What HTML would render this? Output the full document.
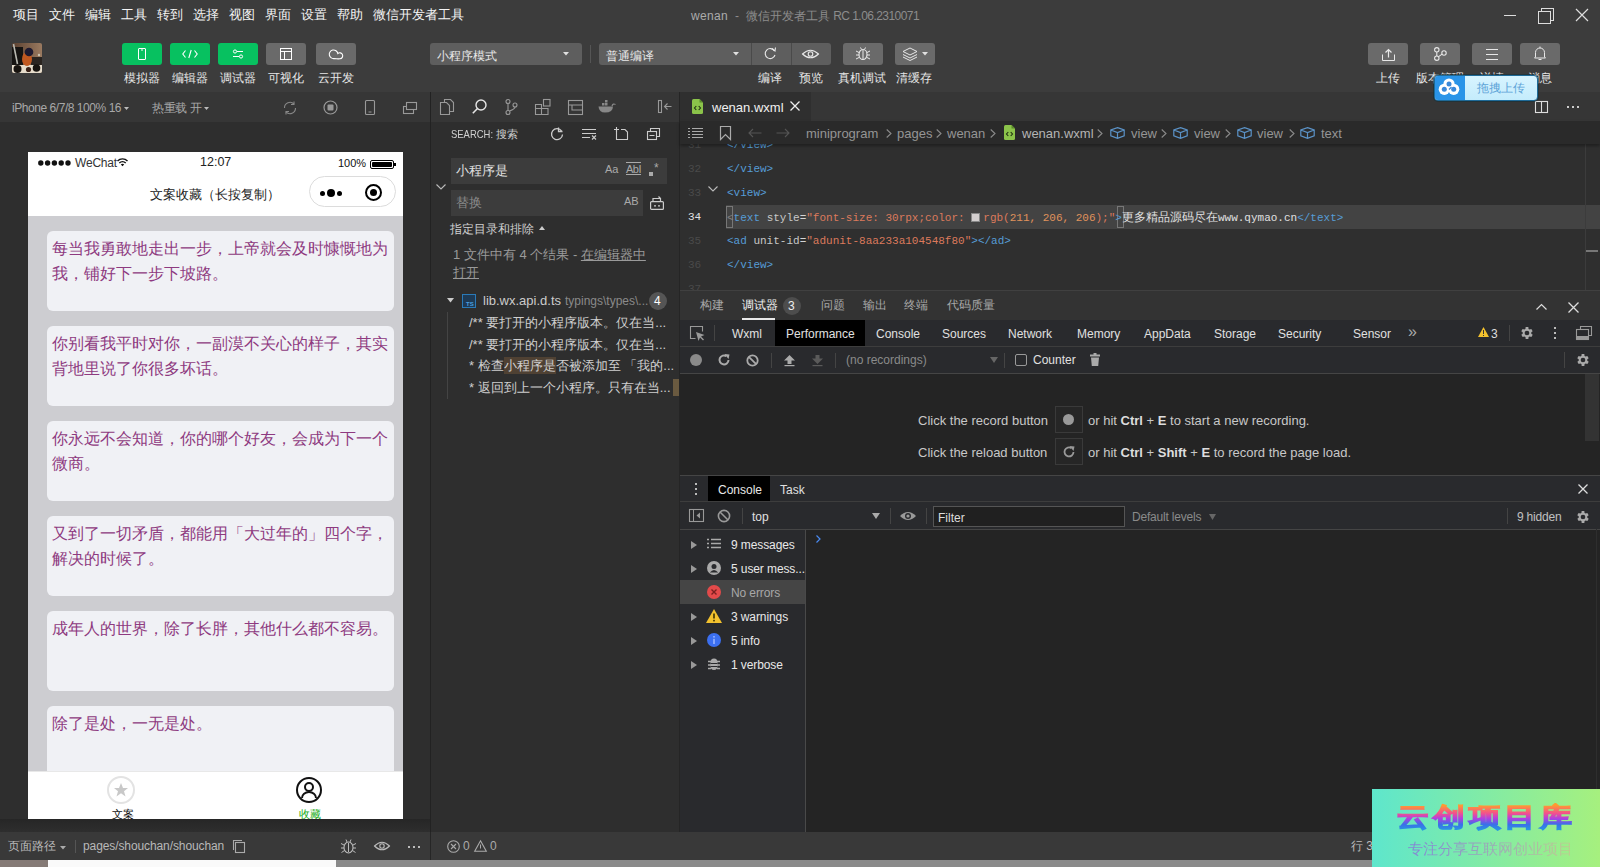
<!DOCTYPE html>
<html><head><meta charset="utf-8">
<style>
*{box-sizing:border-box;margin:0;padding:0}
html,body{width:1600px;height:867px;overflow:hidden;background:#2e2e2e;font-family:"Liberation Sans",sans-serif;color:#ddd}
.a{position:absolute}
.t{position:absolute;white-space:nowrap;line-height:1}
svg{position:absolute;overflow:visible}
.gbtn{position:absolute;top:43px;width:40px;height:22px;border-radius:3px;background:#07c160}
.hbtn{position:absolute;top:43px;width:40px;height:22px;border-radius:3px;background:#6a6a6a}
.lbl{position:absolute;top:71px;font-size:12px;color:#e6e6e6;white-space:nowrap;line-height:14px;text-align:center;width:60px}
.mono{font-family:"Liberation Mono",monospace}
</style></head><body>
<!--TOP-->
<div class="a" style="left:0;top:0;width:1600px;height:92px;background:#3c3c3c"></div>
<div class="t" style="left:13px;top:8px;font-size:13px;color:#f4f4f4">
<span style="margin-right:10px">项目</span><span style="margin-right:10px">文件</span><span style="margin-right:10px">编辑</span><span style="margin-right:10px">工具</span><span style="margin-right:10px">转到</span><span style="margin-right:10px">选择</span><span style="margin-right:10px">视图</span><span style="margin-right:10px">界面</span><span style="margin-right:10px">设置</span><span style="margin-right:10px">帮助</span><span>微信开发者工具</span>
</div>
<div class="t" style="left:691px;top:10px;font-size:12px;color:#8c8c8c"><span style="color:#ababab;letter-spacing:0.3px">wenan</span><span style="margin:0 7px 0 7px">-</span><span>微信开发者工具</span> <span style="letter-spacing:-0.55px">RC 1.06.2310071</span></div>
<div class="a" style="left:1504px;top:15px;width:12px;height:1px;background:#ddd"></div>
<div class="a" style="left:1541px;top:8px;width:13px;height:13px;border:1px solid #ddd"></div>
<div class="a" style="left:1538px;top:11px;width:13px;height:13px;border:1px solid #ddd;background:#3c3c3c"></div>
<svg style="left:1576px;top:9px" width="12" height="12"><path d="M0 0L12 12M12 0L0 12" stroke="#ddd" stroke-width="1.2"/></svg>

<!-- avatar -->
<svg style="left:12px;top:43px" width="30" height="30"><defs><linearGradient id="avbg" x1="0" y1="0" x2="1" y2="0"><stop offset="0" stop-color="#5a4030"/><stop offset="1" stop-color="#9a7a60"/></linearGradient><clipPath id="avc"><rect x="0" y="0" width="30" height="30" rx="2"/></clipPath></defs>
<g clip-path="url(#avc)"><rect width="30" height="30" fill="url(#avbg)"/><rect x="0" y="4" width="11" height="19" fill="#161412"/><rect x="19" y="14" width="11" height="9" fill="#2a2420"/><rect x="0" y="22" width="30" height="8" fill="#e6dccb"/>
<path d="M1.5 1L5.5 21" stroke="#b8b8b0" stroke-width="1.6"/><ellipse cx="15" cy="16" rx="5" ry="7" fill="#c05820"/><circle cx="17" cy="9" r="4.3" fill="#1e1a30"/><circle cx="5.5" cy="26" r="4" fill="#181410"/><circle cx="24.5" cy="25" r="3.8" fill="#181410"/><circle cx="16.5" cy="26.5" r="2.6" fill="#3a2218"/><circle cx="27" cy="12" r="1.2" fill="#c8c0b0"/></g></svg>
<div class="gbtn" style="left:122px"></div>
<svg style="left:138px;top:48px" width="8" height="12"><rect x="0.5" y="0.5" width="7" height="11" rx="0.5" fill="none" stroke="#fff" stroke-width="1"/><line x1="3" y1="2" x2="5" y2="2" stroke="#fff"/></svg>
<div class="gbtn" style="left:170px"></div>
<svg style="left:182px;top:50px" width="16" height="8"><path d="M3.5 0.5L0.8 4L3.5 7.5M12.5 0.5L15.2 4L12.5 7.5M9.2 0L6.8 8" fill="none" stroke="#fff" stroke-width="1.1"/></svg>
<div class="gbtn" style="left:218px"></div>
<svg style="left:232px;top:49px" width="12" height="10"><circle cx="3" cy="2.5" r="1.6" fill="none" stroke="#fff"/><line x1="5" y1="2.5" x2="11" y2="2.5" stroke="#fff"/><circle cx="9" cy="7.5" r="1.6" fill="none" stroke="#fff"/><line x1="1" y1="7.5" x2="7" y2="7.5" stroke="#fff"/></svg>
<div class="hbtn" style="left:266px"></div>
<svg style="left:280px;top:48px" width="12" height="12"><rect x="0.5" y="0.5" width="11" height="11" fill="none" stroke="#fff"/><line x1="0.5" y1="3.5" x2="11.5" y2="3.5" stroke="#fff"/><line x1="4.5" y1="3.5" x2="4.5" y2="11.5" stroke="#fff"/></svg>
<div class="hbtn" style="left:316px"></div>
<svg style="left:328px;top:49px" width="16" height="11"><path d="M6.5 9.5A4.3 4.3 0 1 1 9.8 4.5A3 3 0 1 1 12 9.8Q9 10 6.5 9.5" fill="none" stroke="#fff" stroke-width="1.1"/></svg>
<div class="lbl" style="left:112px">模拟器</div>
<div class="lbl" style="left:160px">编辑器</div>
<div class="lbl" style="left:208px">调试器</div>
<div class="lbl" style="left:256px">可视化</div>
<div class="lbl" style="left:306px">云开发</div>

<!-- selects -->
<div class="a" style="left:430px;top:43px;width:152px;height:22px;border-radius:3px;background:#5e5e5e"></div>
<div class="t" style="left:437px;top:49px;font-size:12px;color:#e8e8e8;line-height:14px">小程序模式</div>
<svg style="left:563px;top:52px" width="6" height="4"><path d="M0 0H6L3 3.5Z" fill="#e0e0e0"/></svg>
<div class="a" style="left:590px;top:45px;width:1px;height:18px;background:#555"></div>
<div class="a" style="left:599px;top:43px;width:232px;height:22px;border-radius:3px;background:#5e5e5e"></div>
<div class="a" style="left:751px;top:43px;width:1px;height:22px;background:#4a4a4a"></div>
<div class="a" style="left:791px;top:43px;width:1px;height:22px;background:#4a4a4a"></div>
<div class="t" style="left:606px;top:49px;font-size:12px;color:#e8e8e8;line-height:14px">普通编译</div>
<svg style="left:733px;top:52px" width="6" height="4"><path d="M0 0H6L3 3.5Z" fill="#e0e0e0"/></svg>
<svg style="left:764px;top:47px" width="13" height="13"><path d="M10.5 4A5 5 0 1 0 11 8" fill="none" stroke="#e8e8e8" stroke-width="1.1"/><path d="M8 1.5L11 4L11.5 0.5" fill="none" stroke="#e8e8e8" stroke-width="1.1"/></svg>
<svg style="left:802px;top:49px" width="17" height="10"><path d="M0.5 5Q8.5 -2.5 16.5 5Q8.5 12.5 0.5 5Z" fill="none" stroke="#e8e8e8" stroke-width="1.1"/><circle cx="8.5" cy="5" r="2.3" fill="none" stroke="#e8e8e8" stroke-width="1.1"/></svg>
<div class="hbtn" style="left:843px"></div>
<svg style="left:855px;top:46px" width="16" height="15"><ellipse cx="8" cy="8.5" rx="4" ry="5" fill="none" stroke="#e8e8e8" stroke-width="1.1"/><line x1="8" y1="4" x2="8" y2="13" stroke="#e8e8e8"/><path d="M1 5L4 6.5M1 9H4M1 13L4 11.5M15 5L12 6.5M15 9H12M15 13L12 11.5M5.5 1.5L6.5 3.5M10.5 1.5L9.5 3.5" stroke="#e8e8e8" stroke-width="1"/></svg>
<div class="hbtn" style="left:895px"></div>
<svg style="left:902px;top:47px" width="16" height="14"><path d="M8 1L15 4.5L8 8L1 4.5Z" fill="none" stroke="#e8e8e8"/><path d="M1 7.5L8 11L15 7.5M1 10L8 13.5L15 10" fill="none" stroke="#e8e8e8"/></svg>
<svg style="left:922px;top:52px" width="6" height="4"><path d="M0 0H6L3 3.5Z" fill="#e0e0e0"/></svg>
<div class="lbl" style="left:740px">编译</div>
<div class="lbl" style="left:781px">预览</div>
<div class="lbl" style="left:832px">真机调试</div>
<div class="lbl" style="left:884px">清缓存</div>

<!-- right buttons -->
<div class="hbtn" style="left:1368px"></div>
<svg style="left:1382px;top:48px" width="13" height="13"><path d="M0.5 6.5V12.5H12.5V6.5" fill="none" stroke="#e8e8e8"/><path d="M6.5 9.5V1.5M3.5 4.5L6.5 1.5L9.5 4.5" fill="none" stroke="#e8e8e8" stroke-width="1.2"/></svg>
<div class="hbtn" style="left:1420px"></div>
<svg style="left:1434px;top:47px" width="13" height="14"><circle cx="2.8" cy="2.8" r="2.2" fill="none" stroke="#e8e8e8" stroke-width="1.1"/><circle cx="2.8" cy="11.2" r="2.2" fill="none" stroke="#e8e8e8" stroke-width="1.1"/><circle cx="10" cy="6" r="2.2" fill="none" stroke="#e8e8e8" stroke-width="1.1"/><path d="M2.8 5V9M8.1 7.1L4.6 9.6" fill="none" stroke="#e8e8e8" stroke-width="1.1"/></svg>
<div class="hbtn" style="left:1472px"></div>
<svg style="left:1486px;top:49px" width="12" height="11"><path d="M0 0.5H12M0 5.5H12M0 10.5H12" stroke="#e8e8e8"/></svg>
<div class="hbtn" style="left:1520px"></div>
<svg style="left:1534px;top:46px" width="12" height="15"><path d="M1.5 11V6.5A4.5 4.5 0 0 1 10.5 6.5V11L11.5 12H0.5Z" fill="none" stroke="#e8e8e8"/><line x1="6" y1="0.5" x2="6" y2="2" stroke="#e8e8e8"/><path d="M4.5 13.5H7.5" stroke="#e8e8e8"/></svg>
<div class="lbl" style="left:1358px">上传</div>
<div class="lbl" style="left:1410px">版本管理</div>
<div class="lbl" style="left:1462px">详情</div>
<div class="lbl" style="left:1510px">消息</div>
<!--/TOP-->
<!--SIM-->
<div class="a" style="left:0;top:92px;width:430px;height:741px;background:#2e2e2e"></div>
<div class="a" style="left:0;top:92px;width:430px;height:30px;background:#363636"></div>
<div class="t" style="left:12px;top:102px;font-size:12px;color:#a8a8a8;letter-spacing:-0.45px">iPhone 6/7/8 100% 16</div>
<svg style="left:124px;top:107px" width="5" height="3"><path d="M0 0H5L2.5 3Z" fill="#bbb"/></svg>
<div class="t" style="left:152px;top:102px;font-size:12px;color:#a8a8a8;letter-spacing:-0.3px">热重载 开</div>
<svg style="left:204px;top:107px" width="5" height="3"><path d="M0 0H5L2.5 3Z" fill="#bbb"/></svg>
<svg style="left:283px;top:101px" width="14" height="14"><path d="M12.5 7A5.5 5.5 0 0 1 3 10.9M1.5 7A5.5 5.5 0 0 1 11 3.1" fill="none" stroke="#888" stroke-width="1.1"/><path d="M11 0.5V3.5H8M3 13.5V10.5H6" fill="none" stroke="#888" stroke-width="1.1"/></svg>
<svg style="left:323px;top:100px" width="15" height="15"><circle cx="7.5" cy="7.5" r="6.5" fill="none" stroke="#999" stroke-width="1.2"/><rect x="4.5" y="4.5" width="6" height="6" rx="1" fill="#999"/></svg>
<svg style="left:365px;top:100px" width="10" height="15"><rect x="0.5" y="0.5" width="9" height="14" rx="1" fill="none" stroke="#999" stroke-width="1.1"/><line x1="3.5" y1="12" x2="6.5" y2="12" stroke="#999"/></svg>
<svg style="left:403px;top:102px" width="14" height="12"><rect x="0.5" y="4.5" width="10" height="7" fill="none" stroke="#999" stroke-width="1.1"/><rect x="3.5" y="0.5" width="10" height="7" fill="#363636" stroke="#999" stroke-width="1.1"/></svg>

<div class="a" style="left:0;top:819px;width:430px;height:13px;background:linear-gradient(180deg,#262626,#2e2e2e)"></div>
<!-- phone -->
<div class="a" style="left:28px;top:152px;width:375px;height:667px;background:#cdcdd1;overflow:hidden">
  <div class="a" style="left:0;top:0;width:375px;height:64px;background:#fff"></div>
  <svg style="left:10px;top:159px;display:none"></svg>
  <svg style="left:10px;top:8px" width="34" height="6"><circle cx="2.8" cy="3" r="2.7" fill="#111"/><circle cx="9.6" cy="3" r="2.7" fill="#111"/><circle cx="16.4" cy="3" r="2.7" fill="#111"/><circle cx="23.2" cy="3" r="2.7" fill="#111"/><circle cx="30" cy="3" r="2.7" fill="#111"/></svg>
  <div class="t" style="left:47px;top:5px;font-size:12px;color:#333;letter-spacing:-0.2px">WeChat</div>
  <svg style="left:89px;top:6px" width="11" height="8"><path d="M0.5 3A7 7 0 0 1 10.5 3M2.3 5A4.5 4.5 0 0 1 8.7 5" fill="none" stroke="#111" stroke-width="1.4"/><path d="M3.8 6.5L5.5 8.3L7.2 6.5A2.4 2.4 0 0 0 3.8 6.5Z" fill="#111"/></svg>
  <div class="t" style="left:172px;top:4px;font-size:12.5px;color:#222">12:07</div>
  <div class="t" style="left:310px;top:6px;font-size:11px;color:#111">100%</div>
  <div class="a" style="left:342px;top:8px;width:24px;height:9px;border:1.2px solid #000;border-radius:2px;padding:1px"><div style="width:100%;height:100%;background:#000;border-radius:1px"></div></div>
  <div class="a" style="left:366px;top:11px;width:2px;height:3px;background:#000"></div>
  <div class="t" style="left:122px;top:36px;font-size:13px;color:#222">文案收藏（长按复制）</div>
  <div class="a" style="left:281px;top:24px;width:87px;height:31px;border:1px solid #dcdcdc;border-radius:16px;background:#fff"></div>
  <div class="a" style="left:292px;top:39px;width:5px;height:5px;border-radius:3px;background:#000"></div>
  <div class="a" style="left:299px;top:37px;width:8px;height:8px;border-radius:4px;background:#000"></div>
  <div class="a" style="left:309px;top:39px;width:5px;height:5px;border-radius:3px;background:#000"></div>
  <div class="a" style="left:337px;top:32px;width:17px;height:17px;border-radius:9px;border:2px solid #000"></div>
  <div class="a" style="left:342px;top:37px;width:7px;height:7px;border-radius:4px;background:#000"></div>
  <div class="a" style="left:19px;top:79px;width:347px;height:80px;border-radius:6px;background:#f0f1f5"></div>
  <div class="a" style="left:24px;top:84px;width:340px;font-size:16px;line-height:25px;color:#8e3a80">每当我勇敢地走出一步，上帝就会及时慷慨地为我，铺好下一步下坡路。</div>
  <div class="a" style="left:19px;top:174px;width:347px;height:80px;border-radius:6px;background:#f0f1f5"></div>
  <div class="a" style="left:24px;top:179px;width:340px;font-size:16px;line-height:25px;color:#8e3a80">你别看我平时对你，一副漠不关心的样子，其实背地里说了你很多坏话。</div>
  <div class="a" style="left:19px;top:269px;width:347px;height:80px;border-radius:6px;background:#f0f1f5"></div>
  <div class="a" style="left:24px;top:274px;width:340px;font-size:16px;line-height:25px;color:#8e3a80">你永远不会知道，你的哪个好友，会成为下一个微商。</div>
  <div class="a" style="left:19px;top:364px;width:347px;height:80px;border-radius:6px;background:#f0f1f5"></div>
  <div class="a" style="left:24px;top:369px;width:340px;font-size:16px;line-height:25px;color:#8e3a80">又到了一切矛盾，都能用「大过年的」四个字，解决的时候了。</div>
  <div class="a" style="left:19px;top:459px;width:347px;height:80px;border-radius:6px;background:#f0f1f5"></div>
  <div class="a" style="left:24px;top:464px;width:340px;font-size:16px;line-height:25px;color:#8e3a80">成年人的世界，除了长胖，其他什么都不容易。</div>
  <div class="a" style="left:19px;top:554px;width:347px;height:80px;border-radius:6px;background:#f0f1f5"></div>
  <div class="a" style="left:24px;top:559px;width:340px;font-size:16px;line-height:25px;color:#8e3a80">除了是处，一无是处。</div>

  <div class="a" style="left:0;top:619px;width:375px;height:48px;background:#fff;border-top:1px solid #e8e8e8"></div>
  <div class="a" style="left:79px;top:624px;width:28px;height:28px;border-radius:14px;border:2px solid #e3e3e3"></div>
  <svg style="left:85px;top:630px" width="16" height="16"><path d="M8 1L10 6H15L11 9.2L12.5 14.5L8 11.3L3.5 14.5L5 9.2L1 6H6Z" fill="#c8c8c8"/></svg>
  <div class="t" style="left:84px;top:657px;font-size:10.5px;color:#111">文案</div>
  <div class="a" style="left:268px;top:625px;width:26px;height:26px;border-radius:13px;border:2px solid #111"></div>
  <svg style="left:268px;top:625px" width="26" height="26"><circle cx="13" cy="10" r="4" fill="none" stroke="#111" stroke-width="2"/><path d="M6 21A7 6 0 0 1 20 21" fill="none" stroke="#111" stroke-width="2"/></svg>
  <div class="t" style="left:271px;top:657px;font-size:10.5px;color:#1aad19">收藏</div>
</div>
<!--/SIM-->
<!--SEARCH-->
<div class="a" style="left:430px;top:92px;width:1px;height:741px;background:#222"></div>
<div class="a" style="left:431px;top:92px;width:249px;height:741px;background:#2e2e2e"></div>
<div class="a" style="left:431px;top:92px;width:249px;height:30px;background:#363636"></div>
<!-- activity icons -->
<svg style="left:440px;top:99px" width="14" height="16"><path d="M4.5 3.5V0.5H10.5L13.5 3.5V12.5H9.5" fill="none" stroke="#999" stroke-width="1.1"/><path d="M0.5 3.5H6.5L9.5 6.5V15.5H0.5Z" fill="none" stroke="#999" stroke-width="1.1"/></svg>
<svg style="left:472px;top:99px" width="15" height="15"><circle cx="9" cy="6" r="5" fill="none" stroke="#e6e6e6" stroke-width="1.4"/><path d="M5.5 9.5L0.8 14.2" stroke="#e6e6e6" stroke-width="1.6"/></svg>
<svg style="left:505px;top:99px" width="13" height="16"><circle cx="3" cy="2.5" r="2" fill="none" stroke="#999" stroke-width="1.1"/><circle cx="3" cy="13.5" r="2" fill="none" stroke="#999" stroke-width="1.1"/><circle cx="10" cy="6" r="2" fill="none" stroke="#999" stroke-width="1.1"/><path d="M3 4.5V11.5M10 8Q10 10 4.5 12" fill="none" stroke="#999" stroke-width="1.1"/></svg>
<svg style="left:535px;top:99px" width="16" height="16"><path d="M0.5 5.5H6.5V9.5H0.5ZM0.5 9.5H6.5V15.5H0.5ZM6.5 9.5H13V15.5H6.5Z" fill="none" stroke="#999" stroke-width="1.1"/><rect x="8.5" y="0.5" width="6.5" height="6.5" fill="none" stroke="#999" stroke-width="1.1"/></svg>
<svg style="left:568px;top:100px" width="15" height="15"><rect x="0.5" y="0.5" width="14" height="14" fill="none" stroke="#999" stroke-width="1.1"/><path d="M0.5 5H14.5M4 5V10H14.5" fill="none" stroke="#999" stroke-width="1.1"/></svg>
<svg style="left:598px;top:101px" width="18" height="12"><path d="M0.5 5.5H15Q15 11.5 7 11.5Q1 11.5 0.5 5.5Z" fill="#888"/><rect x="4" y="2" width="2.5" height="2.5" fill="#888"/><rect x="7" y="2" width="2.5" height="2.5" fill="#888"/><rect x="7" y="-1" width="2.5" height="2.5" fill="#888"/><path d="M14 5Q15 2 17.5 3.5" fill="none" stroke="#888" stroke-width="1.2"/></svg>
<svg style="left:658px;top:100px" width="14" height="13"><rect x="0.5" y="0.5" width="3" height="12" fill="none" stroke="#999" stroke-width="1.1"/><path d="M13.5 6.5H6.5M9.5 3.5L6.5 6.5L9.5 9.5" fill="none" stroke="#999" stroke-width="1.1"/></svg>

<div class="t" style="left:451px;top:129px;font-size:11px;color:#d0d0d0"><span style="display:inline-block;transform:scaleX(0.86);transform-origin:0 0;width:45px">SEARCH:</span>搜索</div>
<svg style="left:550px;top:127px" width="14" height="14"><path d="M11.5 4A5.5 5.5 0 1 0 12.5 7.5" fill="none" stroke="#ccc" stroke-width="1.3"/><path d="M8.5 0.5V4.5H12.5" fill="none" stroke="#ccc" stroke-width="1.3"/></svg>
<svg style="left:582px;top:129px" width="15" height="11"><path d="M0 0.5H14M0 4.5H14M0 8.5H8" stroke="#ccc" stroke-width="1.1"/><path d="M10 6.5L14 10.5M14 6.5L10 10.5" stroke="#ccc" stroke-width="1.1"/></svg>
<svg style="left:614px;top:127px" width="14" height="13"><path d="M2.5 2.5V12.5H13.5V5L11 2.5H7" fill="none" stroke="#ccc" stroke-width="1.1"/><path d="M0 2.5H5M2.5 0V5" stroke="#ccc" stroke-width="1.1"/></svg>
<svg style="left:647px;top:128px" width="13" height="12"><rect x="0.5" y="3.5" width="9" height="8" fill="none" stroke="#ccc" stroke-width="1.1"/><path d="M3.5 3.5V0.5H12.5V8.5H9.5M2.5 7.5H7.5" fill="none" stroke="#ccc" stroke-width="1.1"/></svg>

<svg style="left:436px;top:184px" width="10" height="6"><path d="M0.5 0.5L5 5L9.5 0.5" fill="none" stroke="#bbb" stroke-width="1.1"/></svg>
<div class="a" style="left:451px;top:158px;width:216px;height:26px;background:#3c3c3c"></div>
<div class="t" style="left:456px;top:164px;font-size:13px;color:#e0e0e0">小程序是</div>
<div class="t" style="left:605px;top:164px;font-size:11px;color:#aaa">Aa</div>
<div class="t" style="left:626px;top:164px;font-size:11px;color:#aaa;text-decoration:underline overline;letter-spacing:-0.5px">AbI</div>
<div class="a" style="left:649px;top:172px;width:4px;height:4px;background:#aaa"></div><div class="t" style="left:654px;top:162px;font-size:12px;color:#aaa">*</div>
<div class="a" style="left:451px;top:190px;width:192px;height:26px;background:#3c3c3c"></div>
<div class="t" style="left:456px;top:196px;font-size:13px;color:#8a8a8a">替换</div>
<div class="t" style="left:624px;top:196px;font-size:11px;color:#aaa">AB</div>
<svg style="left:650px;top:196px" width="14" height="14"><rect x="0.6" y="5.6" width="12.8" height="7.8" rx="1" fill="none" stroke="#ccc" stroke-width="1.2"/><path d="M4 9.8H6M8 9.8H10" stroke="#ccc" stroke-width="1.2"/><path d="M3 5V2.5H10.5V5M8.5 0.5L10.5 2.5" fill="none" stroke="#ccc" stroke-width="1.2"/></svg>

<div class="t" style="left:450px;top:223px;font-size:12px;color:#d0d0d0">指定目录和排除</div>
<svg style="left:539px;top:226px" width="6" height="4"><path d="M0 4H6L3 0Z" fill="#ccc"/></svg>
<div class="t" style="left:453px;top:248px;font-size:13px;color:#9a9a9a">1 文件中有 4 个结果 - <span style="text-decoration:underline">在编辑器中</span></div>
<div class="t" style="left:453px;top:266px;font-size:13px;color:#9a9a9a;text-decoration:underline">打开</div>

<svg style="left:447px;top:298px" width="7" height="5"><path d="M0 0H7L3.5 4.5Z" fill="#ccc"/></svg>
<div class="a" style="left:462px;top:294px;width:14px;height:14px;border:1px solid #2a7ab8;background:#1e3a55"></div>
<div class="t" style="left:466px;top:301px;font-size:6px;color:#4aa0e0;font-weight:bold">TS</div>
<div class="t" style="left:483px;top:294px;font-size:13px;color:#ccc">lib.wx.api.d.ts</div>
<div class="t" style="left:565px;top:295px;font-size:12px;color:#8a8a8a">typings\types\...</div>
<div class="a" style="left:649px;top:292px;width:18px;height:18px;border-radius:9px;background:#555"></div>
<div class="t" style="left:654px;top:295px;font-size:12px;color:#fff">4</div>
<div class="a" style="left:447px;top:312px;width:1px;height:87px;background:#444"></div>
<div class="t" style="left:469px;top:316px;font-size:13px;color:#cfcfcf">/** 要打开的小程序版本。仅在当...</div>
<div class="t" style="left:469px;top:338px;font-size:13px;color:#cfcfcf">/** 要打开的小程序版本。仅在当...</div>
<div class="a" style="left:504px;top:357px;width:52px;height:17px;background:rgba(140,100,60,0.35)"></div>
<div class="t" style="left:469px;top:359px;font-size:13px;color:#cfcfcf">* 检查小程序是否被添加至 「我的...</div>
<div class="t" style="left:469px;top:381px;font-size:13px;color:#cfcfcf">* 返回到上一个小程序。只有在当...</div>
<div class="a" style="left:673px;top:379px;width:6px;height:17px;background:#6a5a40"></div>
<div class="a" style="left:679px;top:92px;width:1px;height:741px;background:#252525"></div>
<!--/SEARCH-->
<!--EDITOR-->
<div class="a" style="left:680px;top:92px;width:920px;height:198px;background:#2f2f2f"></div>
<div class="a" style="left:680px;top:92px;width:920px;height:29px;background:#363636"></div>
<div class="a" style="left:680px;top:92px;width:131px;height:29px;background:#2f2f2f"></div>
<svg style="left:692px;top:99px" width="11" height="15"><path d="M0 1.5Q0 0 1.5 0H7.5L11 3.5V13.5Q11 15 9.5 15H1.5Q0 15 0 13.5Z" fill="#8bc34a"/><path d="M7.5 0V3.5H11" fill="#5a8a2a"/><path d="M4.3 7L2.5 9L4.3 11M6.7 7L8.5 9L6.7 11" fill="none" stroke="#1e2e10" stroke-width="1.1"/></svg>
<div class="t" style="left:712px;top:101px;font-size:13px;color:#f0f0f0">wenan.wxml</div>
<svg style="left:790px;top:101px" width="10" height="10"><path d="M0.5 0.5L9.5 9.5M9.5 0.5L0.5 9.5" stroke="#eee" stroke-width="1.3"/></svg>
<svg style="left:1535px;top:101px" width="13" height="12"><rect x="0.5" y="0.5" width="12" height="11" fill="none" stroke="#ddd" stroke-width="1.1"/><line x1="6.5" y1="0.5" x2="6.5" y2="11.5" stroke="#ddd" stroke-width="1.1"/></svg>
<div class="a" style="left:1567px;top:106px;width:2px;height:2px;background:#ccc"></div>
<div class="a" style="left:1572px;top:106px;width:2px;height:2px;background:#ccc"></div>
<div class="a" style="left:1577px;top:106px;width:2px;height:2px;background:#ccc"></div>

<!-- code lines -->
<div class="mono" style="position:absolute;left:0;top:0px;font-size:11px;line-height:24px;white-space:pre">
<div class="a" style="left:688px;top:133px;color:#4a4a4a">31</div>
<div class="a" style="left:727px;top:133px;color:#569cd6">&lt;/view&gt;</div>
<div class="a" style="left:688px;top:157px;color:#4a4a4a">32</div>
<div class="a" style="left:727px;top:157px;color:#569cd6">&lt;/view&gt;</div>
<div class="a" style="left:688px;top:181px;color:#4a4a4a">33</div>
<div class="a" style="left:727px;top:181px;color:#569cd6">&lt;view&gt;</div>
<div class="a" style="left:726px;top:205px;width:874px;height:24px;background:#434343"></div>
<div class="a" style="left:726px;top:206px;width:7px;height:22px;border:1px solid #777"></div>
<div class="a" style="left:1117px;top:206px;width:7px;height:22px;border:1px solid #777"></div>
<div class="a" style="left:688px;top:205px;color:#e0e0e0">34</div>
<div class="a" style="left:727px;top:205px;color:#d4d4d4"><span style="color:#808080">&lt;</span><span style="color:#569cd6">text</span> <span style="color:#c8c8c8">style</span>=<span style="color:#dc7a5c">"font-size: 30rpx;color: </span><span style="display:inline-block;width:9px;height:9px;background:#d3cece;border:1px solid #888;vertical-align:-1px;margin-right:3px"></span><span style="color:#dc7a5c">rgb(</span><span style="color:#e0925c">211, 206, 206</span><span style="color:#dc7a5c">);"</span><span style="color:#569cd6">&gt;</span><span style="font-family:'Liberation Sans',sans-serif;color:#e0e0e0;font-size:12px">更多精品源码尽在</span><span style="color:#e0e0e0">www.qymao.cn</span><span style="color:#569cd6">&lt;/text&gt;</span></div>
<div class="a" style="left:688px;top:229px;color:#4a4a4a">35</div>
<div class="a" style="left:727px;top:229px;color:#d4d4d4"><span style="color:#569cd6">&lt;ad</span> <span style="color:#c8c8c8">unit-id</span>=<span style="color:#dc7a5c">"adunit-8aa233a104548f80"</span><span style="color:#569cd6">&gt;&lt;/ad&gt;</span></div>
<div class="a" style="left:688px;top:253px;color:#4a4a4a">36</div>
<div class="a" style="left:727px;top:253px;color:#569cd6">&lt;/view&gt;</div>
<div class="a" style="left:688px;top:277px;color:#4a4a4a">37</div>
</div>
<svg style="left:708px;top:186px" width="10" height="6"><path d="M0.5 0.5L5 5L9.5 0.5" fill="none" stroke="#bbb" stroke-width="1.1"/></svg>
<div class="a" style="left:1585px;top:143px;width:1px;height:147px;background:#3c3c3c"></div>
<div class="a" style="left:1586px;top:250px;width:12px;height:2px;background:#777"></div>

<!-- breadcrumb -->
<div class="a" style="left:680px;top:121px;width:920px;height:23px;background:#2a2a2a;box-shadow:0 2px 3px rgba(0,0,0,0.35)"></div>
<svg style="left:688px;top:128px" width="15" height="10"><path d="M0 0.5H2M4 0.5H15M0 3.5H2M4 3.5H15M0 6.5H2M4 6.5H15M0 9.5H2M4 9.5H15" stroke="#aaa" stroke-width="1"/></svg>
<svg style="left:720px;top:126px" width="11" height="14"><path d="M0.5 0.5H10.5V13.5L5.5 8.5L0.5 13.5Z" fill="none" stroke="#aaa" stroke-width="1.2"/></svg>
<svg style="left:748px;top:128px" width="14" height="10"><path d="M13.5 5H1M5 1L1 5L5 9" fill="none" stroke="#555" stroke-width="1.1"/></svg>
<svg style="left:776px;top:128px" width="14" height="10"><path d="M0.5 5H13M9 1L13 5L9 9" fill="none" stroke="#555" stroke-width="1.1"/></svg>
<div class="t" style="left:806px;top:127px;font-size:13px;color:#959595">miniprogram</div>
<svg style="left:886px;top:129px" width="6" height="9"><path d="M0.7 0.5L5 4.5L0.7 8.5" fill="none" stroke="#8a8a8a" stroke-width="1.1"/></svg>
<div class="t" style="left:897px;top:127px;font-size:13px;color:#959595">pages</div>
<svg style="left:936px;top:129px" width="6" height="9"><path d="M0.7 0.5L5 4.5L0.7 8.5" fill="none" stroke="#8a8a8a" stroke-width="1.1"/></svg>
<div class="t" style="left:947px;top:127px;font-size:13px;color:#959595">wenan</div>
<svg style="left:990px;top:129px" width="6" height="9"><path d="M0.7 0.5L5 4.5L0.7 8.5" fill="none" stroke="#8a8a8a" stroke-width="1.1"/></svg>
<svg style="left:1004px;top:125px" width="11" height="15"><path d="M0 1.5Q0 0 1.5 0H7.5L11 3.5V13.5Q11 15 9.5 15H1.5Q0 15 0 13.5Z" fill="#8bc34a"/><path d="M7.5 0V3.5H11" fill="#5a8a2a"/><path d="M4.3 7L2.5 9L4.3 11M6.7 7L8.5 9L6.7 11" fill="none" stroke="#1e2e10" stroke-width="1.1"/></svg>
<div class="t" style="left:1022px;top:127px;font-size:13px;color:#b4b4b4">wenan.wxml</div>
<svg style="left:1097px;top:129px" width="6" height="9"><path d="M0.7 0.5L5 4.5L0.7 8.5" fill="none" stroke="#8a8a8a" stroke-width="1.1"/></svg>
<svg style="left:1110px;top:127px" width="15" height="12"><path d="M7.5 0.6L14.2 3V8.8L7.5 11.4L0.8 8.8V3Z M0.8 3L7.5 5.6L14.2 3 M7.5 5.6V11.4" fill="none" stroke="#5b93c8" stroke-width="1.2"/></svg>
<div class="t" style="left:1131px;top:127px;font-size:13px;color:#959595">view</div>
<svg style="left:1161px;top:129px" width="6" height="9"><path d="M0.7 0.5L5 4.5L0.7 8.5" fill="none" stroke="#8a8a8a" stroke-width="1.1"/></svg>
<svg style="left:1173px;top:127px" width="15" height="12"><path d="M7.5 0.6L14.2 3V8.8L7.5 11.4L0.8 8.8V3Z M0.8 3L7.5 5.6L14.2 3 M7.5 5.6V11.4" fill="none" stroke="#5b93c8" stroke-width="1.2"/></svg>
<div class="t" style="left:1194px;top:127px;font-size:13px;color:#959595">view</div>
<svg style="left:1225px;top:129px" width="6" height="9"><path d="M0.7 0.5L5 4.5L0.7 8.5" fill="none" stroke="#8a8a8a" stroke-width="1.1"/></svg>
<svg style="left:1237px;top:127px" width="15" height="12"><path d="M7.5 0.6L14.2 3V8.8L7.5 11.4L0.8 8.8V3Z M0.8 3L7.5 5.6L14.2 3 M7.5 5.6V11.4" fill="none" stroke="#5b93c8" stroke-width="1.2"/></svg>
<div class="t" style="left:1257px;top:127px;font-size:13px;color:#959595">view</div>
<svg style="left:1289px;top:129px" width="6" height="9"><path d="M0.7 0.5L5 4.5L0.7 8.5" fill="none" stroke="#8a8a8a" stroke-width="1.1"/></svg>
<svg style="left:1300px;top:127px" width="15" height="12"><path d="M7.5 0.6L14.2 3V8.8L7.5 11.4L0.8 8.8V3Z M0.8 3L7.5 5.6L14.2 3 M7.5 5.6V11.4" fill="none" stroke="#5b93c8" stroke-width="1.2"/></svg>
<div class="t" style="left:1321px;top:127px;font-size:13px;color:#959595">text</div>
<!--/EDITOR-->
<!--DEVTOOLS-->
<div class="a" style="left:680px;top:290px;width:920px;height:543px;background:#242424"></div>
<div class="a" style="left:680px;top:290px;width:920px;height:30px;background:#333;border-top:1px solid #404040"></div>
<div class="t" style="left:700px;top:299px;font-size:12px;color:#a8a8a8">构建</div>
<div class="t" style="left:742px;top:299px;font-size:12px;color:#f2f2f2">调试器</div>
<div class="a" style="left:742px;top:318px;width:33px;height:2px;background:#e8e8e8"></div>
<div class="a" style="left:783px;top:297px;width:18px;height:18px;border-radius:9px;background:#4d4d4d"></div>
<div class="t" style="left:788px;top:300px;font-size:12px;color:#eee">3</div>
<div class="t" style="left:821px;top:299px;font-size:12px;color:#a8a8a8">问题</div>
<div class="t" style="left:863px;top:299px;font-size:12px;color:#a8a8a8">输出</div>
<div class="t" style="left:904px;top:299px;font-size:12px;color:#a8a8a8">终端</div>
<div class="t" style="left:947px;top:299px;font-size:12px;color:#a8a8a8">代码质量</div>
<svg style="left:1536px;top:304px" width="11" height="6"><path d="M0.5 5.5L5.5 0.5L10.5 5.5" fill="none" stroke="#ddd" stroke-width="1.2"/></svg>
<svg style="left:1568px;top:302px" width="11" height="11"><path d="M0.5 0.5L10.5 10.5M10.5 0.5L0.5 10.5" stroke="#ddd" stroke-width="1.3"/></svg>

<!-- devtools tab row -->
<div class="a" style="left:680px;top:320px;width:920px;height:27px;background:#292a2d;border-bottom:1px solid #3d3d3d"></div>
<svg style="left:690px;top:326px" width="15" height="15"><path d="M5.5 12.5H0.5V0.5H12.5V5.5" fill="none" stroke="#999" stroke-width="1.1"/><path d="M6 6L14.5 9L11 10.5L14 13.5L13 14.5L10 11.5L8.5 15Z" fill="#999"/></svg>
<div class="a" style="left:714px;top:325px;width:1px;height:16px;background:#444"></div>
<div class="a" style="left:775px;top:320px;width:90px;height:26px;background:#000"></div>
<div class="t" style="left:732px;top:328px;font-size:12px;color:#e0e0e0">Wxml</div>
<div class="t" style="left:786px;top:328px;font-size:12px;color:#e0e0e0">Performance</div>
<div class="t" style="left:876px;top:328px;font-size:12px;color:#e0e0e0">Console</div>
<div class="t" style="left:942px;top:328px;font-size:12px;color:#e0e0e0">Sources</div>
<div class="t" style="left:1008px;top:328px;font-size:12px;color:#e0e0e0">Network</div>
<div class="t" style="left:1077px;top:328px;font-size:12px;color:#e0e0e0">Memory</div>
<div class="t" style="left:1144px;top:328px;font-size:12px;color:#e0e0e0">AppData</div>
<div class="t" style="left:1214px;top:328px;font-size:12px;color:#e0e0e0">Storage</div>
<div class="t" style="left:1278px;top:328px;font-size:12px;color:#e0e0e0">Security</div>
<div class="t" style="left:1353px;top:328px;font-size:12px;color:#e0e0e0">Sensor</div>

<div class="t" style="left:1408px;top:324px;font-size:16px;color:#aaa">»</div>
<svg style="left:1478px;top:327px" width="11" height="10"><path d="M5.5 0L11 10H0Z" fill="#f2c12e"/><rect x="5" y="3" width="1" height="4" fill="#333"/><rect x="5" y="8" width="1" height="1" fill="#333"/></svg>
<div class="t" style="left:1491px;top:328px;font-size:12px;color:#ddd">3</div>
<div class="a" style="left:1509px;top:325px;width:1px;height:16px;background:#444"></div>
<svg style="left:1519px;top:325px" width="16" height="16" viewBox="0 0 24 24"><path fill="#aaa" d="M19.4 13a7.6 7.6 0 0 0 0-2l2.1-1.6-2-3.5-2.5 1a7.4 7.4 0 0 0-1.7-1L15 3h-4l-.4 2.9a7.4 7.4 0 0 0-1.7 1l-2.5-1-2 3.5L6.6 11a7.6 7.6 0 0 0 0 2l-2.1 1.6 2 3.5 2.5-1a7.4 7.4 0 0 0 1.7 1L11 21h4l.4-2.9a7.4 7.4 0 0 0 1.7-1l2.5 1 2-3.5zM13 15.5a3.5 3.5 0 1 1 0-7 3.5 3.5 0 0 1 0 7z" transform="translate(-1 0)"/></svg>
<div class="a" style="left:1554px;top:327px;width:2px;height:2px;background:#bbb"></div>
<div class="a" style="left:1554px;top:332px;width:2px;height:2px;background:#bbb"></div>
<div class="a" style="left:1554px;top:337px;width:2px;height:2px;background:#bbb"></div>
<svg style="left:1576px;top:326px" width="16" height="14"><path d="M4.5 3.5V0.5H15.5V9.5H12.5" fill="none" stroke="#999" stroke-width="1.1"/><rect x="0.5" y="3.5" width="12" height="10" fill="none" stroke="#999" stroke-width="1.1"/><rect x="0.5" y="10" width="12" height="3.5" fill="#999"/></svg>

<!-- perf toolbar -->
<div class="a" style="left:680px;top:347px;width:920px;height:27px;background:#292a2d;border-bottom:1px solid #454545"></div>
<div class="a" style="left:690px;top:354px;width:12px;height:12px;border-radius:6px;background:#8a8a8a"></div>
<svg style="left:718px;top:354px" width="12" height="12"><path d="M10.5 6A4.5 4.5 0 1 1 8.5 2.2" fill="none" stroke="#aaa" stroke-width="2"/><path d="M6.5 0L11.5 0.5L10.5 5Z" fill="#aaa"/></svg>
<svg style="left:746px;top:354px" width="13" height="13"><circle cx="6.5" cy="6.5" r="5.2" fill="none" stroke="#aaa" stroke-width="1.8"/><path d="M2.8 2.8L10.2 10.2" stroke="#aaa" stroke-width="1.8"/></svg>
<div class="a" style="left:771px;top:353px;width:1px;height:15px;background:#444"></div>
<svg style="left:784px;top:355px" width="11" height="11"><path d="M5.5 0L11 5.5H7.5V9H3.5V5.5H0Z" fill="#aaa"/><rect x="0.5" y="10" width="10" height="1.2" fill="#aaa"/></svg>
<svg style="left:812px;top:355px" width="11" height="11"><path d="M5.5 9L11 3.5H7.5V0H3.5V3.5H0Z" fill="#5a5a5a"/><rect x="0.5" y="10" width="10" height="1.2" fill="#5a5a5a"/></svg>
<div class="a" style="left:835px;top:353px;width:1px;height:15px;background:#444"></div>
<div class="t" style="left:846px;top:354px;font-size:12px;color:#8a8a8a">(no recordings)</div>
<svg style="left:990px;top:357px" width="8" height="6"><path d="M0 0H8L4 6Z" fill="#666"/></svg>
<div class="a" style="left:1004px;top:353px;width:1px;height:15px;background:#444"></div>
<div class="a" style="left:1015px;top:354px;width:12px;height:12px;border:1px solid #999;border-radius:2px"></div>
<div class="t" style="left:1033px;top:354px;font-size:12px;color:#e0e0e0">Counter</div>
<svg style="left:1090px;top:353px" width="10" height="13"><rect x="0" y="1.5" width="10" height="2" fill="#aaa"/><rect x="3.5" y="0" width="3" height="2" fill="#aaa"/><path d="M1 4.5H9L8.2 13H1.8Z" fill="#aaa"/></svg>
<div class="a" style="left:1564px;top:352px;width:1px;height:16px;background:#444"></div>
<svg style="left:1575px;top:352px" width="16" height="16" viewBox="0 0 24 24"><path fill="#aaa" d="M19.4 13a7.6 7.6 0 0 0 0-2l2.1-1.6-2-3.5-2.5 1a7.4 7.4 0 0 0-1.7-1L15 3h-4l-.4 2.9a7.4 7.4 0 0 0-1.7 1l-2.5-1-2 3.5L6.6 11a7.6 7.6 0 0 0 0 2l-2.1 1.6 2 3.5 2.5-1a7.4 7.4 0 0 0 1.7 1L11 21h4l.4-2.9a7.4 7.4 0 0 0 1.7-1l2.5 1 2-3.5zM13 15.5a3.5 3.5 0 1 1 0-7 3.5 3.5 0 0 1 0 7z" transform="translate(-1 0)"/></svg>

<!-- perf body -->
<div class="a" style="left:1585px;top:374px;width:14px;height:67px;background:#333"></div>
<div class="t" style="left:918px;top:414px;font-size:13px;color:#c8c8c8">Click the record button</div>
<div class="a" style="left:1055px;top:406px;width:28px;height:27px;border:1px solid #3a3a3a;background:#262626"></div>
<div class="a" style="left:1063px;top:414px;width:11px;height:11px;border-radius:6px;background:#999"></div>
<div class="t" style="left:1088px;top:414px;font-size:13px;color:#c8c8c8">or hit <b style="color:#ddd">Ctrl</b> + <b style="color:#ddd">E</b> to start a new recording.</div>
<div class="t" style="left:918px;top:446px;font-size:13px;color:#c8c8c8">Click the reload button</div>
<div class="a" style="left:1055px;top:438px;width:28px;height:27px;border:1px solid #3a3a3a;background:#262626"></div>
<svg style="left:1063px;top:446px" width="12" height="12"><path d="M10.5 6A4.5 4.5 0 1 1 8.5 2.2" fill="none" stroke="#999" stroke-width="1.8"/><path d="M6.5 0L11.5 0.5L10.5 5Z" fill="#999"/></svg>
<div class="t" style="left:1088px;top:446px;font-size:13px;color:#c8c8c8">or hit <b style="color:#ddd">Ctrl</b> + <b style="color:#ddd">Shift</b> + <b style="color:#ddd">E</b> to record the page load.</div>

<!-- drawer -->
<div class="a" style="left:680px;top:475px;width:920px;height:27px;background:#292a2d;border-top:1px solid #454545;border-bottom:1px solid #3d3d3d"></div>
<div class="a" style="left:695px;top:483px;width:2px;height:2px;background:#bbb"></div>
<div class="a" style="left:695px;top:488px;width:2px;height:2px;background:#bbb"></div>
<div class="a" style="left:695px;top:493px;width:2px;height:2px;background:#bbb"></div>
<div class="a" style="left:708px;top:476px;width:62px;height:25px;background:#000"></div>
<div class="t" style="left:718px;top:484px;font-size:12px;color:#e8e8e8">Console</div>
<div class="t" style="left:780px;top:484px;font-size:12px;color:#e0e0e0">Task</div>
<svg style="left:1578px;top:484px" width="10" height="10"><path d="M0.5 0.5L9.5 9.5M9.5 0.5L0.5 9.5" stroke="#ddd" stroke-width="1.3"/></svg>

<div class="a" style="left:680px;top:502px;width:920px;height:28px;background:#292a2d;border-bottom:1px solid #454545"></div>
<svg style="left:689px;top:509px" width="15" height="13"><rect x="0.5" y="0.5" width="14" height="12" fill="none" stroke="#999" stroke-width="1.1"/><line x1="4.5" y1="0.5" x2="4.5" y2="12.5" stroke="#999"/><path d="M11 3.5L7.5 6.5L11 9.5Z" fill="#999"/></svg>
<svg style="left:717px;top:509px" width="14" height="14"><circle cx="7" cy="7" r="5.6" fill="none" stroke="#999" stroke-width="1.6"/><path d="M3 3L11 11" stroke="#999" stroke-width="1.6"/></svg>
<div class="a" style="left:742px;top:508px;width:1px;height:16px;background:#444"></div>
<div class="t" style="left:752px;top:511px;font-size:12px;color:#e0e0e0">top</div>
<svg style="left:872px;top:513px" width="8" height="6"><path d="M0 0H8L4 6Z" fill="#aaa"/></svg>
<div class="a" style="left:890px;top:508px;width:1px;height:16px;background:#444"></div>
<svg style="left:900px;top:511px" width="16" height="10"><path d="M0 5Q8 -3 16 5Q8 13 0 5Z" fill="#999"/><circle cx="8" cy="5" r="3" fill="#292a2d"/><circle cx="8" cy="5" r="1.6" fill="#999"/></svg>
<div class="a" style="left:926px;top:508px;width:1px;height:16px;background:#444"></div>
<div class="a" style="left:933px;top:506px;width:192px;height:21px;border:1px solid #555;background:#202020"></div>
<div class="t" style="left:938px;top:512px;font-size:12px;color:#ddd">Filter</div>
<div class="t" style="left:1132px;top:511px;font-size:12px;color:#8a8a8a;letter-spacing:-0.2px">Default levels</div>
<svg style="left:1209px;top:514px" width="7" height="6"><path d="M0 0H7L3.5 6Z" fill="#666"/></svg>
<div class="a" style="left:1507px;top:508px;width:1px;height:16px;background:#444"></div>
<div class="t" style="left:1517px;top:511px;font-size:12px;color:#c0c0c0;letter-spacing:-0.2px">9 hidden</div>
<svg style="left:1575px;top:509px" width="16" height="16" viewBox="0 0 24 24"><path fill="#aaa" d="M19.4 13a7.6 7.6 0 0 0 0-2l2.1-1.6-2-3.5-2.5 1a7.4 7.4 0 0 0-1.7-1L15 3h-4l-.4 2.9a7.4 7.4 0 0 0-1.7 1l-2.5-1-2 3.5L6.6 11a7.6 7.6 0 0 0 0 2l-2.1 1.6 2 3.5 2.5-1a7.4 7.4 0 0 0 1.7 1L11 21h4l.4-2.9a7.4 7.4 0 0 0 1.7-1l2.5 1 2-3.5zM13 15.5a3.5 3.5 0 1 1 0-7 3.5 3.5 0 0 1 0 7z" transform="translate(-1 0)"/></svg>

<!-- console sidebar -->
<div class="a" style="left:680px;top:530px;width:126px;height:303px;background:#292a2d;border-right:1px solid #494949"></div>
<div class="a" style="left:680px;top:580px;width:125px;height:24px;background:#454545"></div>
<svg style="left:691px;top:541px" width="6" height="8"><path d="M0 0L6 4L0 8Z" fill="#999"/></svg>
<svg style="left:707px;top:539px" width="14" height="10"><path d="M0 0.5H2M4 0.5H14M0 4.5H2M4 4.5H14M0 8.5H2M4 8.5H14" stroke="#aaa" stroke-width="1.4"/></svg>
<div class="t" style="letter-spacing:-0.1px;left:731px;top:539px;font-size:12px;color:#e8e8e8">9 messages</div>
<svg style="left:691px;top:565px" width="6" height="8"><path d="M0 0L6 4L0 8Z" fill="#999"/></svg>
<svg style="left:707px;top:561px" width="14" height="14"><circle cx="7" cy="7" r="7" fill="#aaa"/><circle cx="7" cy="5.5" r="2.5" fill="#292a2d"/><path d="M2.8 11.5Q7 6.5 11.2 11.5" fill="#292a2d"/></svg>
<div class="t" style="letter-spacing:-0.1px;left:731px;top:563px;font-size:12px;color:#e8e8e8">5 user mess...</div>
<svg style="left:707px;top:585px" width="14" height="14"><circle cx="7" cy="7" r="7" fill="#e24a4a"/><path d="M4.5 4.5L9.5 9.5M9.5 4.5L4.5 9.5" stroke="#7a2020" stroke-width="1.4"/></svg>
<div class="t" style="letter-spacing:-0.1px;left:731px;top:587px;font-size:12px;color:#a8a8a8">No errors</div>
<svg style="left:691px;top:613px" width="6" height="8"><path d="M0 0L6 4L0 8Z" fill="#999"/></svg>
<svg style="left:706px;top:609px" width="16" height="14"><path d="M8 0L16 14H0Z" fill="#f2c12e"/><rect x="7.2" y="4.5" width="1.6" height="5" fill="#3a3000"/><rect x="7.2" y="10.8" width="1.6" height="1.6" fill="#3a3000"/></svg>
<div class="t" style="letter-spacing:-0.1px;left:731px;top:611px;font-size:12px;color:#e8e8e8">3 warnings</div>
<svg style="left:691px;top:637px" width="6" height="8"><path d="M0 0L6 4L0 8Z" fill="#999"/></svg>
<svg style="left:707px;top:633px" width="14" height="14"><circle cx="7" cy="7" r="7" fill="#3b6ff0"/><rect x="6.2" y="5.8" width="1.6" height="5.2" fill="#9ab4ff"/><rect x="6.2" y="3" width="1.6" height="1.6" fill="#9ab4ff"/></svg>
<div class="t" style="letter-spacing:-0.1px;left:731px;top:635px;font-size:12px;color:#e8e8e8">5 info</div>
<svg style="left:691px;top:661px" width="6" height="8"><path d="M0 0L6 4L0 8Z" fill="#999"/></svg>
<svg style="left:707px;top:657px" width="14" height="14"><path d="M3.5 5.5Q3.5 1.5 7 1.5Q10.5 1.5 10.5 5.5V9Q10.5 13 7 13Q3.5 13 3.5 9Z" fill="#aaa"/><path d="M1 4.5H4M1 8H4M1 11.5H4M10 4.5H13M10 8H13M10 11.5H13" stroke="#aaa" stroke-width="1.5"/><rect x="3.5" y="6" width="7" height="1" fill="#292a2d"/><rect x="3.5" y="9" width="7" height="1" fill="#292a2d"/></svg>
<div class="t" style="letter-spacing:-0.1px;left:731px;top:659px;font-size:12px;color:#e8e8e8">1 verbose</div>
<svg style="left:816px;top:535px" width="5" height="8"><path d="M0.5 0.5L4 4L0.5 7.5" fill="none" stroke="#4a8af0" stroke-width="1.2"/></svg>
<div class="a" style="left:1596px;top:529px;width:1px;height:303px;background:#2e2e2e"></div>
<!--/DEVTOOLS-->
<!--BOTTOM-->
<!-- status bar -->
<div class="a" style="left:0;top:832px;width:1600px;height:28px;background:#393939"></div>
<div class="a" style="left:430px;top:832px;width:1px;height:28px;background:#262626"></div>
<div class="t" style="left:8px;top:840px;font-size:12px;color:#b8b8b8">页面路径</div>
<svg style="left:60px;top:846px" width="6" height="4"><path d="M0 0H6L3 3.5Z" fill="#aaa"/></svg>
<div class="a" style="left:75px;top:840px;width:1px;height:13px;background:#555"></div>
<div class="t" style="left:83px;top:840px;font-size:12px;color:#b8b8b8;letter-spacing:-0.1px">pages/shouchan/shouchan</div>
<svg style="left:233px;top:840px" width="12" height="13"><rect x="2.5" y="2.5" width="9" height="10" fill="none" stroke="#aaa" stroke-width="1.1"/><path d="M0.5 10V0.5H9" fill="none" stroke="#aaa" stroke-width="1.1"/></svg>
<svg style="left:340px;top:838px" width="17" height="17"><ellipse cx="8.5" cy="9.5" rx="4.5" ry="5.5" fill="none" stroke="#bbb" stroke-width="1.1"/><line x1="8.5" y1="5" x2="8.5" y2="14" stroke="#bbb"/><path d="M1 5.5L4 7M1 10H4M1.5 14.5L4.5 12.5M16 5.5L13 7M16 10H13M15.5 14.5L12.5 12.5M6 1.5L7 4M11 1.5L10 4" stroke="#bbb" stroke-width="1"/></svg>
<svg style="left:374px;top:841px" width="16" height="10"><path d="M0.5 5Q8 -2.5 15.5 5Q8 12.5 0.5 5Z" fill="none" stroke="#bbb" stroke-width="1.1"/><circle cx="8" cy="5" r="2.2" fill="none" stroke="#bbb" stroke-width="1.1"/></svg>
<div class="a" style="left:408px;top:846px;width:2px;height:2px;background:#bbb"></div>
<div class="a" style="left:413px;top:846px;width:2px;height:2px;background:#bbb"></div>
<div class="a" style="left:418px;top:846px;width:2px;height:2px;background:#bbb"></div>
<svg style="left:447px;top:840px" width="13" height="13"><circle cx="6.5" cy="6.5" r="5.8" fill="none" stroke="#aaa" stroke-width="1.1"/><path d="M4 4L9 9M9 4L4 9" stroke="#aaa" stroke-width="1.1"/></svg>
<div class="t" style="left:463px;top:840px;font-size:12px;color:#aaa">0</div>
<svg style="left:474px;top:840px" width="13" height="12"><path d="M6.5 0.8L12.3 11.3H0.7Z" fill="none" stroke="#aaa" stroke-width="1.1"/><line x1="6.5" y1="4.5" x2="6.5" y2="8.5" stroke="#aaa"/></svg>
<div class="t" style="left:490px;top:840px;font-size:12px;color:#aaa">0</div>
<div class="t" style="left:1351px;top:840px;font-size:12px;color:#bdbdbd">行 3</div>

<!-- bottom strip -->
<div class="a" style="left:0;top:860px;width:1600px;height:7px;background:#8a8a8a"></div>
<div class="a" style="left:0;top:860px;width:48px;height:7px;background:#857a76"></div>
<div class="a" style="left:48px;top:860px;width:288px;height:7px;background:#fafafa"></div>

<!-- watermark -->
<div class="a" style="left:1372px;top:789px;width:228px;height:78px;background:linear-gradient(90deg,#5ee6cc,#a6f07e)"></div>
<div class="t" style="left:1397px;top:803px;font-size:28px;font-weight:700;letter-spacing:3.4px;-webkit-text-stroke:1.3px transparent;transform:scale(1.14,0.93);transform-origin:0 0;background:linear-gradient(180deg,#ff9a30 8%,#f2508e 35%,#b040e0 52%,#3a70e8 72%,#22a0e0 95%);-webkit-background-clip:text;background-clip:text;color:transparent;line-height:32px">云创项目库</div>
<div class="t" style="left:1408px;top:841px;font-size:14.5px;font-family:'Liberation Serif',serif;background:linear-gradient(90deg,rgba(140,100,220,0.75),rgba(255,140,160,0.35));-webkit-background-clip:text;background-clip:text;color:transparent;line-height:16px">专注分享互联网创业项目</div>

<!-- drag upload overlay -->
<div class="a" style="left:1434px;top:75px;width:104px;height:26px;border-radius:4px;background:linear-gradient(180deg,#d8f4ff,#c4ecfc);border:1px solid #1e6a98;box-shadow:0 0 0 1px rgba(20,50,60,0.6);overflow:hidden">
  <div class="a" style="left:0;top:0;width:30px;height:26px;background:#2a94e8"></div>
</div>
<svg style="left:1438px;top:77px" width="22" height="20"><circle cx="11" cy="7" r="5.6" fill="#fff"/><circle cx="6.3" cy="12.3" r="5.6" fill="#fff"/><circle cx="15.7" cy="12.3" r="5.6" fill="#fff"/><circle cx="11" cy="7" r="2.5" fill="#3a88d8"/><circle cx="6.3" cy="12.3" r="2.5" fill="#3a88d8"/><circle cx="15.7" cy="12.3" r="2.5" fill="#3a88d8"/><path d="M11 12.5 L13.5 10" stroke="#3a88d8" stroke-width="1.2"/></svg>
<div class="t" style="left:1477px;top:82px;font-size:12px;color:#5ea4d8">拖拽上传</div>
<!--/BOTTOM-->
</body></html>
